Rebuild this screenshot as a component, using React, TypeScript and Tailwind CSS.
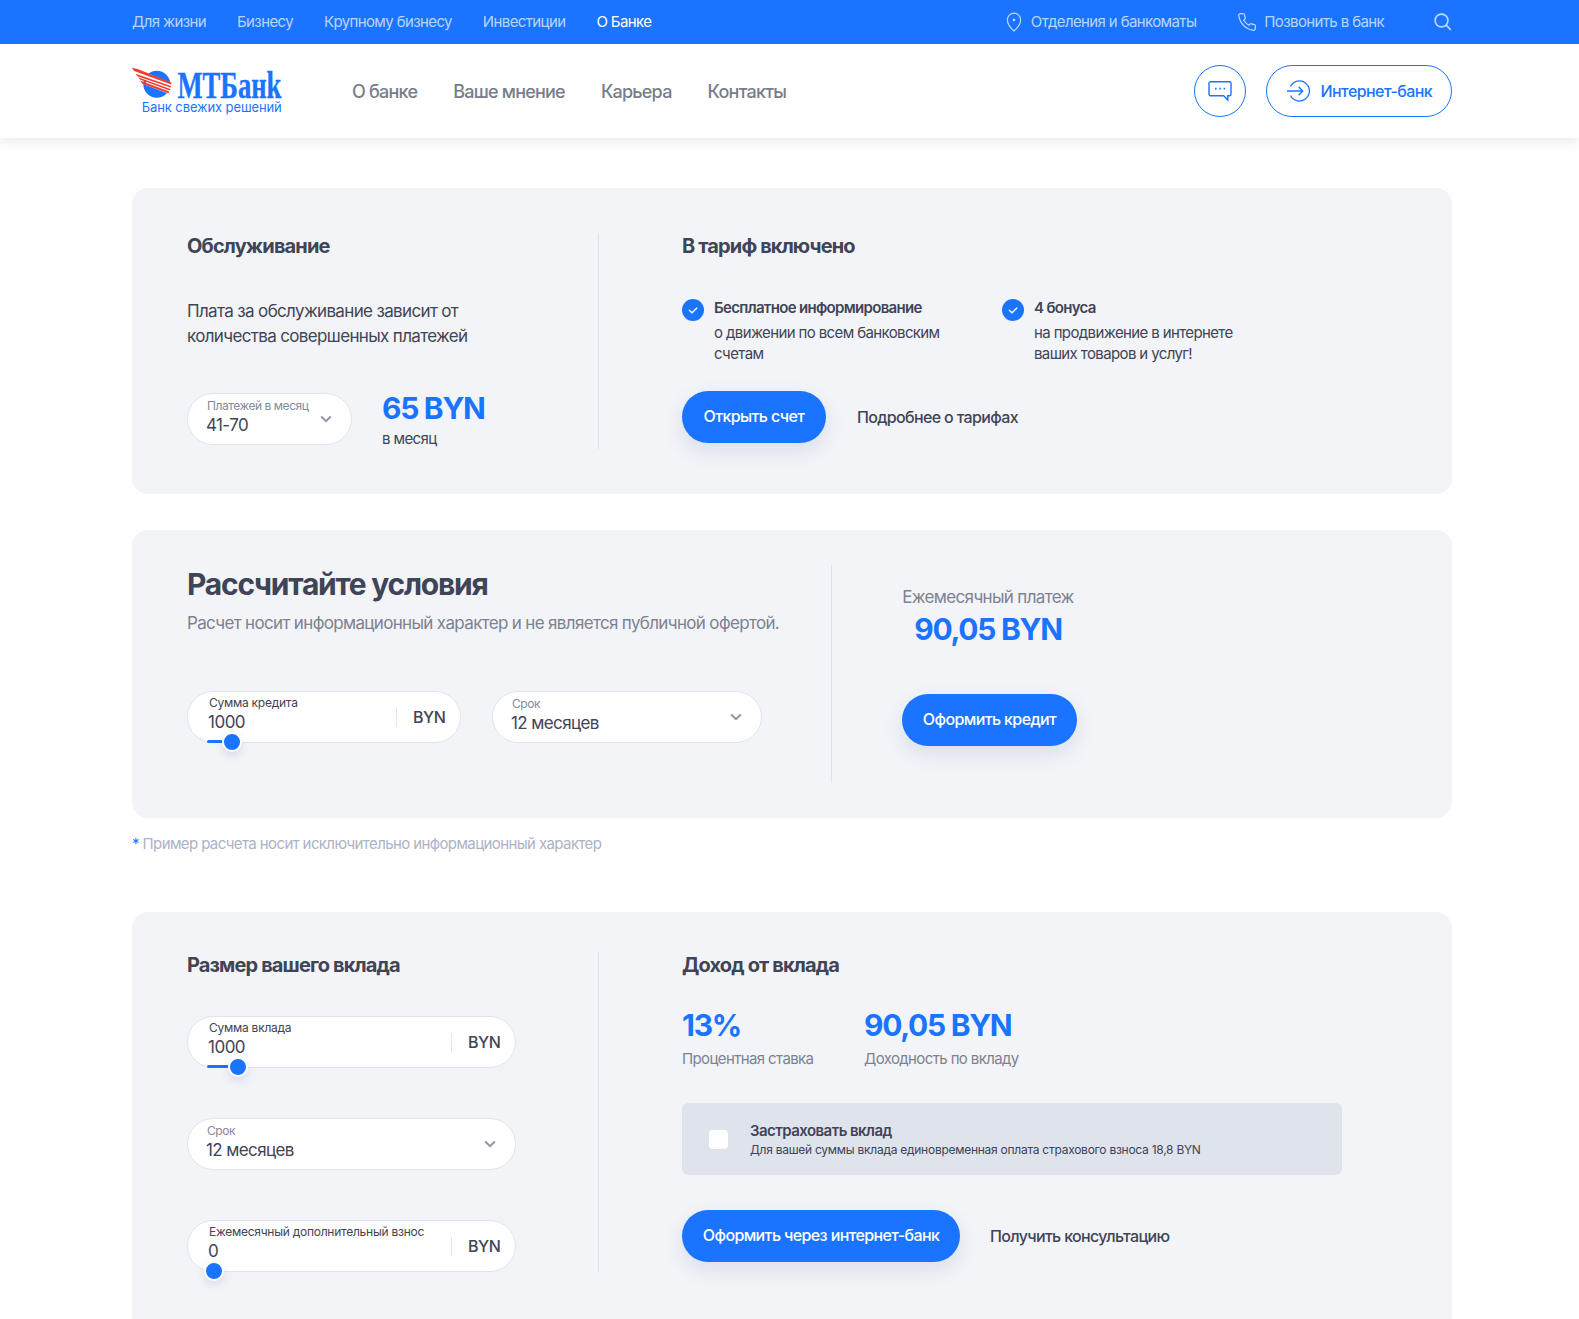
import React from "react";

const topLinks = ["Для жизни", "Бизнесу", "Крупному бизнесу", "Инвестиции"];

function Logo() {
  return (
    <svg className="block h-[50px] w-[152px] overflow-visible" viewBox="0 0 152 50">
      <circle cx="24.8" cy="18.2" r="13.5" fill="#1b74ff" />
      <g stroke="#fff" strokeWidth="4.6">
        <path d="M10 7.500 40 19.600M12 12 39.500 22.500M14 16.500 37.500 25.600" />
      </g>
      <g fill="#f23a2e">
        <path d="M-0.200 1.800 5.500 3 39.400 16.600 39.200 18.500 2.200 5z" />
        <path d="M3.600 7.800 39 20 38.700 21.600 5.400 10.300z" />
        <path d="M6 11.200 38.300 22.900 37.800 24.400 8 13.600z" />
        <path d="M8 14.600 37.200 25.600 36.400 27.200 10.400 17.700z" />
      </g>
      <text x="45.400" y="31.600" textLength="104" lengthAdjust="spacingAndGlyphs" fill="#1b74ff" stroke="#1b74ff" strokeWidth="0.400" className="font-['Liberation_Serif'] text-[38px] font-bold">МТБанk</text>
      <text x="9.800" y="46.400" textLength="140" fill="#1b74ff" className="font-['Inter'] text-[13px]">Банк свежих решений</text>
    </svg>
  );
}

function Chevron() {
  return (
    <svg className="h-2 w-3" viewBox="0 0 12 8" fill="none" stroke="#9095a3" strokeWidth="2">
      <path d="m1.200 1.500 4.800 4.600 4.800-4.600" />
    </svg>
  );
}

function Select({ label, value, width, pad }: { label: string; value: string; width: string; pad: string }) {
  return (
    <div className={`flex h-[52px] items-center justify-between rounded-full border border-[#e0e4ee] bg-white pl-[18px] ${width} ${pad}`}>
      <div className="pb-[7px]">
        <div className="pl-px text-[12px] leading-[18px] tracking-[-0.45px] text-[#858a99]">{label}</div>
        <div className="text-[17px] leading-5 tracking-[-0.6px]">{value}</div>
      </div>
      <Chevron />
    </div>
  );
}

function AmountInput({ label, value, width, thumb }: { label: string; value: string; width: string; thumb: number }) {
  return (
    <div className={`relative flex h-[52px] rounded-full border border-[#e0e4ee] bg-white pl-5 pr-[15px] ${width}`}>
      <div className="flex-1 pt-0.5">
        <div className="pl-px text-[12px] leading-[18px] tracking-[-0.25px]">{label}</div>
        <div className="text-[17px] leading-5 tracking-[-0.5px]">{value}</div>
      </div>
      <div className="mt-4 h-[19px] w-px bg-[#e0e4ee]" />
      <div className="ml-4 w-[32px] text-[16px] leading-[51px] tracking-[-0.5px] font-medium whitespace-nowrap">BYN</div>
      <div className="absolute bottom-[-1px] left-[18.5px] h-[3px] rounded-full bg-[#1b74ff]" style={{ width: Math.max(0, thumb - 28) }} />
      <div className="absolute bottom-[-10px] h-5 w-5 rounded-full border-2 border-white bg-[#1b74ff] shadow-[0_4px_10px_rgba(60,80,150,0.14)]" style={{ left: thumb - 10 }} />
    </div>
  );
}

function PrimaryButton({ children, width }: { children: React.ReactNode; width: string }) {
  return (
    <button className={`h-[52px] shrink-0 rounded-full bg-[#1b74ff] pb-[2px] text-[16px] font-medium tracking-[-0.62px] whitespace-nowrap text-white shadow-[0_8px_20px_rgba(70,95,150,0.14)] ${width}`}>
      {children}
    </button>
  );
}

function Benefit({ title, lines, width }: { title: string; lines: string[]; width: string }) {
  return (
    <div className={`flex gap-2.5 ${width}`}>
      <svg className="mt-0.5 h-[22px] w-[22px]" viewBox="0 0 22 22" fill="none">
        <circle cx="11" cy="11" r="11" fill="#1b74ff" />
        <path d="m7 11 3 2.800 5.200-5" stroke="#fff" strokeWidth="1.400" />
      </svg>
      <div className="text-[15px] leading-[21px] tracking-[-0.62px] whitespace-nowrap">
        <div className="mb-1 font-semibold tracking-[-0.68px]">{title}</div>
        {lines.map((l) => (
          <div key={l}>{l}</div>
        ))}
      </div>
    </div>
  );
}

const heading = "text-[20px] leading-6 font-bold tracking-[-0.86px]";
const figure = "text-[30px] leading-9 font-bold tracking-[-1.3px] text-[#1b74ff] whitespace-nowrap";

export default function App() {
  return (
    <div className="h-[1319px] w-[1579px] overflow-hidden bg-white font-['Inter',sans-serif] text-[#3f4456]">
      <div className="flex h-11 items-center bg-[#1b74ff] pr-[127px] pl-[132px] text-[15px] tracking-[-0.62px] whitespace-nowrap text-white/70">
        <nav className="flex flex-1 gap-[31px]">
          {topLinks.map((l) => (
            <a key={l}>{l}</a>
          ))}
          <a className="text-white">О Банке</a>
        </nav>
        <svg className="mr-2 h-5 w-[18px]" viewBox="0 0 18 20" fill="none" stroke="currentColor" strokeWidth="1.200">
          <path d="M15.600 7.800c0 4.400-4.100 9.100-6.600 11.200C6.500 16.900 2.400 12.200 2.400 7.800a6.600 6.600 0 0 1 13.200 0z" />
          <circle cx="9" cy="8" r="0.700" fill="currentColor" />
        </svg>
        <a className="mr-[41px]">Отделения и банкоматы</a>
        <svg className="mr-[7px] h-5 w-5" viewBox="0 0 24 24" fill="none" stroke="currentColor" strokeWidth="1.500">
          <path d="M22 16.920v3a2 2 0 0 1-2.180 2 19.790 19.790 0 0 1-8.630-3.070 19.500 19.500 0 0 1-6-6 19.790 19.790 0 0 1-3.070-8.670A2 2 0 0 1 4.110 2h3a2 2 0 0 1 2 1.720c.127.960.361 1.903.700 2.810a2 2 0 0 1-.450 2.110L8.090 9.910a16 16 0 0 0 6 6l1.270-1.270a2 2 0 0 1 2.110-.450c.907.339 1.850.573 2.810.700A2 2 0 0 1 22 16.920z" />
        </svg>
        <a className="mr-[50px]">Позвонить в банк</a>
        <svg className="h-[18px] w-[18px]" viewBox="0 0 18 18" fill="none" stroke="currentColor" strokeWidth="1.700">
          <circle cx="7.500" cy="7.500" r="6.400" />
          <path d="m12.200 12.200 4.600 4.600" />
        </svg>
      </div>

      <header className="flex h-[94px] items-center pr-[127px] pl-[132px] shadow-[0_4px_10px_rgba(40,55,90,0.10)]">
        <Logo />
        <nav className="mt-px ml-[68px] flex flex-1 gap-9 text-[18px] font-medium tracking-[-0.77px] whitespace-nowrap text-[#777d8a]">
          <a>О банке</a>
          <a>Ваше мнение</a>
          <a>Карьера</a>
          <a>Контакты</a>
        </nav>
        <button className="mr-5 flex h-[52px] w-[52px] items-center justify-center rounded-full border border-[#1b74ff]">
          <svg className="h-[22px] w-6" viewBox="0 0 24 22" fill="none" stroke="#1b74ff" strokeWidth="1.400">
            <path d="M2.500 1.700h19a1.500 1.500 0 0 1 1.500 1.500v11a1.500 1.500 0 0 1-1.500 1.500h-1.700v4.300l-4.100-4.300H2.500a1.500 1.500 0 0 1-1.500-1.500v-11a1.500 1.500 0 0 1 1.500-1.500z" />
            <path d="M7 8.700h1.600M11.300 8.700h1.600M15.600 8.700h1.600" strokeWidth="1.800" />
          </svg>
        </button>
        <button className="flex h-[52px] w-[186px] items-center rounded-full border border-[#1b74ff] pl-5 text-[16px] font-medium tracking-[-0.57px] whitespace-nowrap text-[#1b74ff]">
          <svg className="mr-[10.5px] h-[22px] w-[23px] shrink-0" viewBox="0 0 23 22" fill="none" stroke="currentColor" strokeWidth="1.300">
            <path d="M3.500 6.500a10 10 0 1 1 0 9M0 11h15.500M11.700 6.800l4 4.200-4 4.200" />
          </svg>
          Интернет-банк
        </button>
      </header>

      <main className="pl-[132px]">
        <section className="mt-[50px] flex h-[306px] w-[1320px] rounded-2xl bg-[#f2f4f8] pt-[45px] pl-[55px]">
          <div className="h-[216px] w-[412px] border-r border-[#dee2ec]">
            <h2 className={`${heading} mt-px`}>Обслуживание</h2>
            <p className="mt-[41px] text-[17px] leading-[25px] tracking-[-0.65px]">
              Плата за обслуживание зависит от
              <br />
              количества совершенных платежей
            </p>
            <div className="mt-11 flex gap-[30px]">
              <Select label="Платежей в месяц" value="41-70" width="w-[165px]" pad="pr-[19px]" />
              <div className="-mt-[3px]">
                <div className={figure}>65 BYN</div>
                <div className="mt-[3px] text-[15px] leading-5 tracking-[-0.6px]">в месяц</div>
              </div>
            </div>
          </div>
          <div className="ml-[83px]">
            <h2 className={`${heading} mt-px`}>В тариф включено</h2>
            <div className="mt-[39px] flex">
              <Benefit title="Бесплатное информирование" lines={["о движении по всем банковским", "счетам"]} width="w-[320px]" />
              <Benefit title="4 бонуса" lines={["на продвижение в интернете", "ваших товаров и услуг!"]} width="w-[260px]" />
            </div>
            <div className="mt-[27px] flex items-center gap-[31px]">
              <PrimaryButton width="w-[144px]">Открыть счет</PrimaryButton>
              <a className="text-[16px] font-medium tracking-[-0.66px]">Подробнее о тарифах</a>
            </div>
          </div>
        </section>

        <section className="mt-9 flex h-[288px] w-[1320px] rounded-2xl bg-[#f2f4f8] pt-[35px] pl-[55px]">
          <div className="h-[218px] w-[645px] border-r border-[#dee2ec]">
            <h1 className="mt-px text-[30px] leading-9 font-bold tracking-[-1.25px]">Рассчитайте условия</h1>
            <p className="mt-[9px] text-[17px] leading-6 tracking-[-0.66px] whitespace-nowrap text-[#7d8290]">
              Расчет носит информационный характер и не является публичной офертой.
            </p>
            <div className="mt-14 flex gap-[31px]">
              <AmountInput label="Сумма кредита" value="1000" width="w-[274px]" thumb={44} />
              <Select label="Срок" value="12 месяцев" width="w-[270px]" pad="pr-[19px]" />
            </div>
          </div>
          <div className="ml-[70px] pt-5">
            <div className="flex w-[172px] flex-col items-center">
              <div className="text-[17px] leading-6 tracking-[-0.65px] whitespace-nowrap text-[#7d8290]">Ежемесячный платеж</div>
              <div className={`${figure} mt-[2px]`}>90,05 BYN</div>
            </div>
            <div className="mt-[47px]">
              <PrimaryButton width="w-[175px]">Оформить кредит</PrimaryButton>
            </div>
          </div>
        </section>

        <p className="mt-4 text-[15px] leading-5 tracking-[-0.61px] text-[#adb2c6]">
          <span className="text-[#1b74ff]">*</span> Пример расчета носит исключительно информационный характер
        </p>

        <section className="mt-[58px] flex h-[440px] w-[1320px] rounded-2xl bg-[#f2f4f8] pt-10 pl-[55px]">
          <div className="h-[320px] w-[412px] border-r border-[#dee2ec]">
            <h2 className={`${heading} mt-px`}>Размер вашего вклада</h2>
            <div className="mt-[39px] flex flex-col gap-[50px]">
              <AmountInput label="Сумма вклада" value="1000" width="w-[329px]" thumb={50} />
              <Select label="Срок" value="12 месяцев" width="w-[329px]" pad="pr-[19px]" />
              <AmountInput label="Ежемесячный дополнительный взнос" value="0" width="w-[329px]" thumb={26} />
            </div>
          </div>
          <div className="ml-[83px]">
            <h2 className={`${heading} mt-px`}>Доход от вклада</h2>
            <div className="mt-[30px] flex text-[15px] leading-5 tracking-[-0.62px] text-[#7d8290]">
              <div className="w-[182px]">
                <div className={figure}>13%</div>
                <div className="mt-[6px]">Процентная ставка</div>
              </div>
              <div>
                <div className={figure}>90,05 BYN</div>
                <div className="mt-[6px]">Доходность по вкладу</div>
              </div>
            </div>
            <div className="mt-[34px] flex h-[72px] w-[660px] items-center rounded-md bg-[#dee3ec] pl-[27px]">
              <div className="mr-[22px] h-[19px] w-[19px] rounded bg-white" />
              <div className="pt-[2px]">
                <div className="text-[15px] leading-5 font-semibold tracking-[-0.55px]">Застраховать вклад</div>
                <div className="text-[12px] leading-[18px] tracking-[-0.26px]">Для вашей суммы вклада единовременная оплата страхового взноса 18,8 BYN</div>
              </div>
            </div>
            <div className="mt-[35px] flex items-center gap-[30px]">
              <PrimaryButton width="w-[278px]">Оформить через интернет-банк</PrimaryButton>
              <a className="text-[16px] font-medium tracking-[-0.65px]">Получить консультацию</a>
            </div>
          </div>
        </section>
      </main>
    </div>
  );
}
